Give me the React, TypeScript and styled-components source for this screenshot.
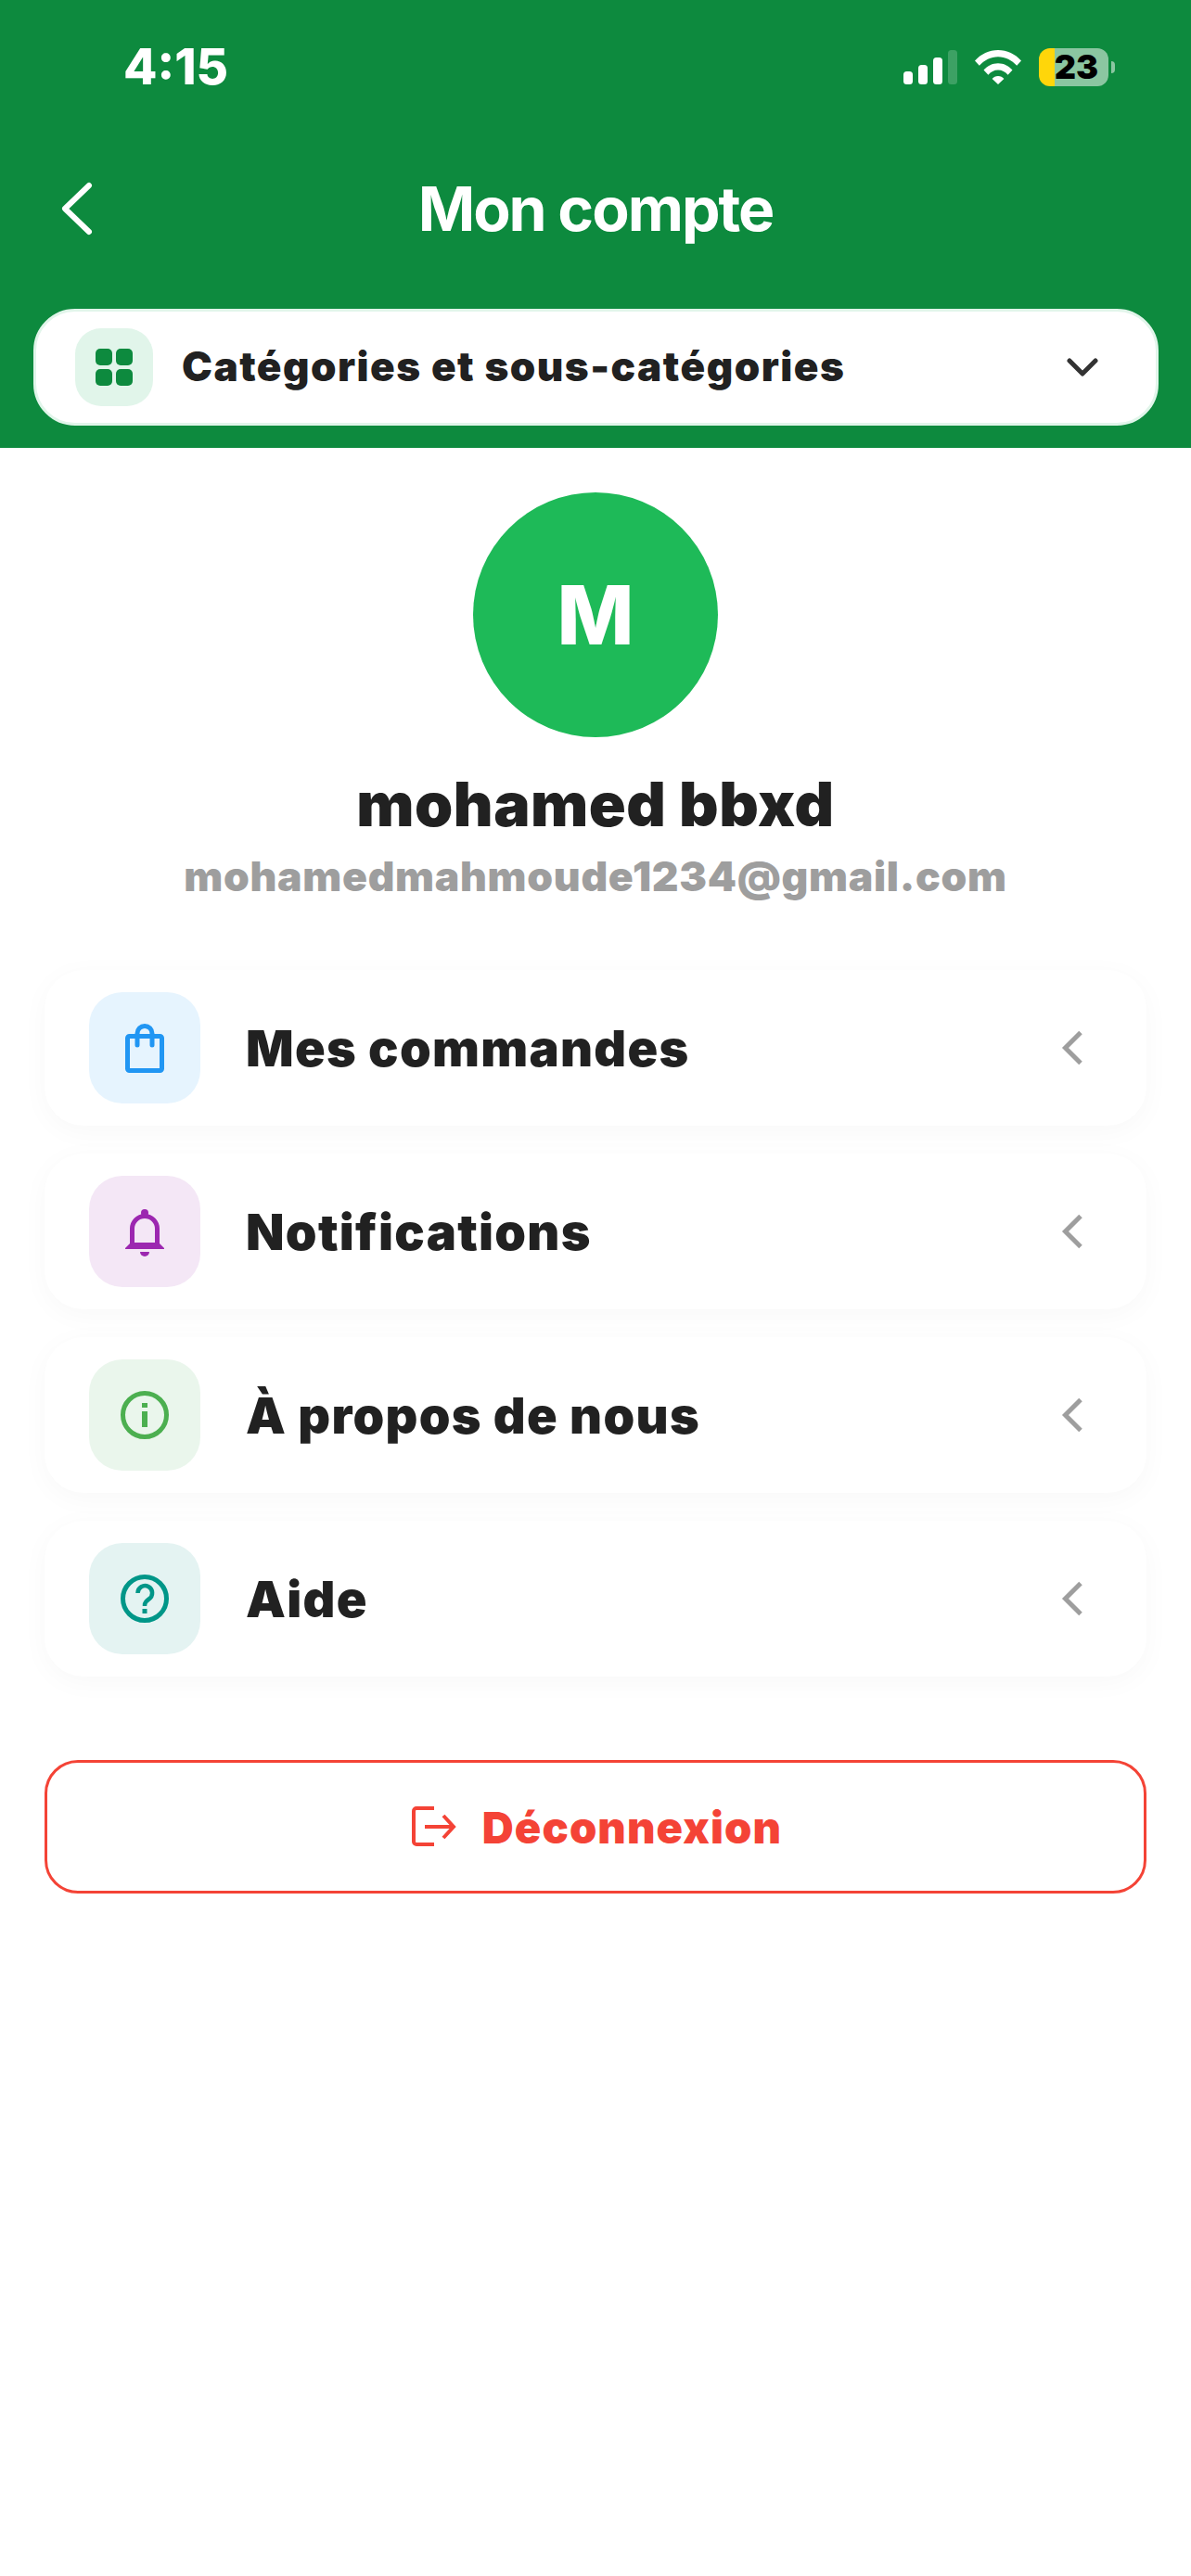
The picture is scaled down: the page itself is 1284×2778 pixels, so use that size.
import React from "react";
import styled, { createGlobalStyle } from "styled-components";

const Global = createGlobalStyle`
  html, body { margin: 0; padding: 0; background: #fff; }
  body { font-family: Inter, "Liberation Sans", sans-serif; color: #212121; }
  * { box-sizing: border-box; }
`;
const Page = styled.div`width: 1284px; height: 2778px; background: #fff; overflow: hidden;`;
const Header = styled.header`background: #0d8a3e; height: 483px; display: flex; flex-direction: column;`;
const StatusBar = styled.div`height: 144px; display: flex; align-items: center; justify-content: space-between; padding: 0 82px 0 133px;`;
const Clock = styled.span`font-size: 53px; font-weight: 800; color: #fff; letter-spacing: 0;`;
const StatusIcons = styled.div`display: flex; align-items: center; gap: 19px;`;
const Battery = styled.div`display: flex; align-items: center; gap: 3px;`;
const BatteryBody = styled.div`
  width: 75px; height: 41px; border-radius: 12px; display: flex; align-items: center; justify-content: center;
  padding-left: 6px; font-size: 36px; font-weight: 900; color: #000; letter-spacing: 0;
  background: linear-gradient(90deg, #ffd60a 17px, #8bc6a1 17px);
`;
const BatteryNub = styled.div`width: 4px; height: 13px; border-radius: 0 4px 4px 0; background: #8bc6a1;`;
const Nav = styled.div`height: 162px; margin-bottom: 27px; display: grid; grid-template-columns: 1fr auto 1fr; align-items: center; padding-left: 66px;`;
const Title = styled.h1`margin: 0 0 0 -66px; font-size: 66px; font-weight: 700; color: #fff; letter-spacing: -2px;`;
const Select = styled.div`
  margin: 0 35px 0 36px; height: 126px; background: #fff; border: 3px solid #e1f5ea; border-radius: 45px;
  display: flex; align-items: center; padding: 0 62px 0 42px;
`;
const SelectIcon = styled.div`width: 84px; height: 84px; border-radius: 28px; background: #e1f5ea; display: grid; place-items: center; margin-right: 31px;`;
const SelectLabel = styled.span`flex: 1; font-size: 44px; font-weight: 900; color: #212121; letter-spacing: 1.500px; margin-top: -3px;`;
const Profile = styled.section`display: flex; flex-direction: column; align-items: center; padding-top: 48px;`;
const Avatar = styled.div`width: 264px; height: 264px; border-radius: 50%; background: #1eba58; color: #fff; display: grid; place-items: center; font-size: 88px; font-weight: 800;`;
const Name = styled.h2`margin: 36px 0 0; height: 72px; line-height: 72px; font-size: 66px; font-weight: 900; color: #212121; letter-spacing: .5px;`;
const Email = styled.div`margin-top: 15px; height: 54px; line-height: 54px; font-size: 44.500px; font-weight: 900; color: #9e9e9e; letter-spacing: .7px;`;
const Menu = styled.nav`margin: 74px 48px 0; display: flex; flex-direction: column; gap: 30px;`;
const Card = styled.div`
  height: 168px; background: #fff; border-radius: 42px; box-shadow: 0 6px 30px rgba(0,0,0,.03);
  display: flex; align-items: center; padding: 0 68px 0 48px;
`;
const IconBox = styled.div<{ $bg: string }>`width: 120px; height: 120px; border-radius: 36px; background: ${p => p.$bg}; display: grid; place-items: center; margin-right: 49px;`;
const CardLabel = styled.span`flex: 1; font-size: 54px; font-weight: 900; color: #212121; letter-spacing: 1.300px;`;
const Logout = styled.button`
  margin: 90px 48px 0; width: 1188px; height: 144px; border: 3px solid #f44336; border-radius: 36px; background: #fff;
  display: flex; align-items: center; justify-content: center; gap: 28px; color: #f44336;
  font-family: inherit; font-size: 47px; font-weight: 900; letter-spacing: 1.100px; padding: 0 0 0 3px;
`;

const Signal = () => (
  <svg width="58" height="37" viewBox="0 0 58 37">
    <rect x="0" y="23" width="10" height="14" rx="3.5" fill="#fff" />
    <rect x="16" y="16" width="10" height="21" rx="3.5" fill="#fff" />
    <rect x="32" y="8" width="10" height="29" rx="3.5" fill="#fff" />
    <rect x="48" y="0" width="10" height="37" rx="3.5" fill="#fff" opacity=".2" />
  </svg>
);
const Wifi = () => (
  <svg width="50" height="37" viewBox="0 0 50 37" fill="#fff">
    <path d="M0 11.5C6.500 4.200 15.300 0 25 0s18.500 4.200 25 11.500l-4.800 5.200C39.800 10.800 32.800 7.200 25 7.200S10.200 10.800 4.800 16.700z" />
    <path d="M9.500 21.600C13.500 17 19 14.300 25 14.300s11.500 2.700 15.500 7.300l-4.900 5.200C32.900 23.600 29.200 21.600 25 21.600s-7.900 2-10.600 5.200z" />
    <path d="M18.600 31c1.600-2 3.800-3 6.400-3s4.800 1 6.400 3L25 37z" />
  </svg>
);
const Back = () => (
  <svg width="34" height="58" viewBox="0 0 34 58" fill="none" stroke="#fff" strokeWidth="6" strokeLinecap="round" strokeLinejoin="round">
    <path d="M30 4 4 29l26 25" />
  </svg>
);
const Grid = () => (
  <svg width="40" height="40" viewBox="0 0 40 40" fill="#0d8a3e">
    <rect x="0" y="0" width="18" height="18" rx="5" />
    <rect x="22" y="0" width="18" height="18" rx="5" />
    <rect x="0" y="22" width="18" height="18" rx="5" />
    <rect x="22" y="22" width="18" height="18" rx="5" />
  </svg>
);
const ChevronDown = () => (
  <svg width="34" height="22" viewBox="0 0 34 22" fill="none" stroke="#333" strokeWidth="5" strokeLinecap="round" strokeLinejoin="round">
    <path d="M3 4l14 14L31 4" />
  </svg>
);
const ChevronLeft = () => (
  <svg width="24" height="38" viewBox="0 0 24 38" fill="none" stroke="#9e9e9e" strokeWidth="5">
    <path d="M21 2.500 4.500 19 21 35.500" />
  </svg>
);
const Bag = () => (
  <svg width="72" height="72" viewBox="0 0 72 72" fill="none" stroke="#2196f3" strokeWidth="5" strokeLinecap="round" strokeLinejoin="round">
    <rect x="17.500" y="23.500" width="37" height="37" rx="2" />
    <path d="M28 33V20.500a8 8 0 0 1 16 0V33" />
  </svg>
);
const Bell = () => (
  <svg width="72" height="72" viewBox="0 0 72 72" fill="none">
    <path d="M22.500 50V33a13.500 13.500 0 0 1 27 0v17" stroke="#9c27b0" strokeWidth="5" />
    <path d="M15 55v-1l6-6h30l6 6v1z" fill="#9c27b0" />
    <circle cx="36" cy="16" r="4" fill="#9c27b0" />
    <path d="M31 58h10a5 5 0 0 1-10 0z" fill="#9c27b0" />
  </svg>
);
const Info = () => (
  <svg width="72" height="72" viewBox="0 0 72 72" fill="none">
    <circle cx="36" cy="36" r="23.500" stroke="#4caf50" strokeWidth="5" />
    <rect x="33" y="23" width="6" height="5" fill="#4caf50" />
    <rect x="33" y="32" width="6" height="17" fill="#4caf50" />
  </svg>
);
const Help = () => (
  <svg width="72" height="72" viewBox="0 0 72 72" fill="none">
    <circle cx="36" cy="36" r="23.500" stroke="#009688" strokeWidth="5" />
    <path d="M28.500 30a7.800 7.800 0 1 1 12 6.500c-2.700 1.800-4.500 3.300-4.500 6.500v1" stroke="#009688" strokeWidth="4.500" />
    <rect x="33.500" y="47" width="5" height="5" fill="#009688" />
  </svg>
);
const LogoutIcon = () => (
  <svg width="48" height="48" viewBox="0 0 48 48" fill="none" stroke="#f44336" strokeWidth="4">
    <path d="M24 4H5a3 3 0 0 0-3 3v33a3 3 0 0 0 3 3h19" />
    <path d="M14 24h31M34 12l11 12-11 12" />
  </svg>
);

const items = [
  { label: "Mes commandes", bg: "#e6f4fe", icon: <Bag /> },
  { label: "Notifications", bg: "#f4e7f6", icon: <Bell /> },
  { label: "À propos de nous", bg: "#eaf6ec", icon: <Info /> },
  { label: "Aide", bg: "#e4f3f2", icon: <Help /> },
];

export default function App() {
  return (
    <Page>
      <Global />
      <Header>
        <StatusBar>
          <Clock>4:15</Clock>
          <StatusIcons>
            <Signal />
            <Wifi />
            <Battery>
              <BatteryBody>23</BatteryBody>
              <BatteryNub />
            </Battery>
          </StatusIcons>
        </StatusBar>
        <Nav>
          <Back />
          <Title>Mon compte</Title>
        </Nav>
        <Select>
          <SelectIcon><Grid /></SelectIcon>
          <SelectLabel>Catégories et sous-catégories</SelectLabel>
          <ChevronDown />
        </Select>
      </Header>
      <Profile>
        <Avatar>M</Avatar>
        <Name>mohamed bbxd</Name>
        <Email>mohamedmahmoude1234@gmail.com</Email>
      </Profile>
      <Menu>
        {items.map(it => (
          <Card key={it.label}>
            <IconBox $bg={it.bg}>{it.icon}</IconBox>
            <CardLabel>{it.label}</CardLabel>
            <ChevronLeft />
          </Card>
        ))}
      </Menu>
      <Logout><LogoutIcon />Déconnexion</Logout>
    </Page>
  );
}
